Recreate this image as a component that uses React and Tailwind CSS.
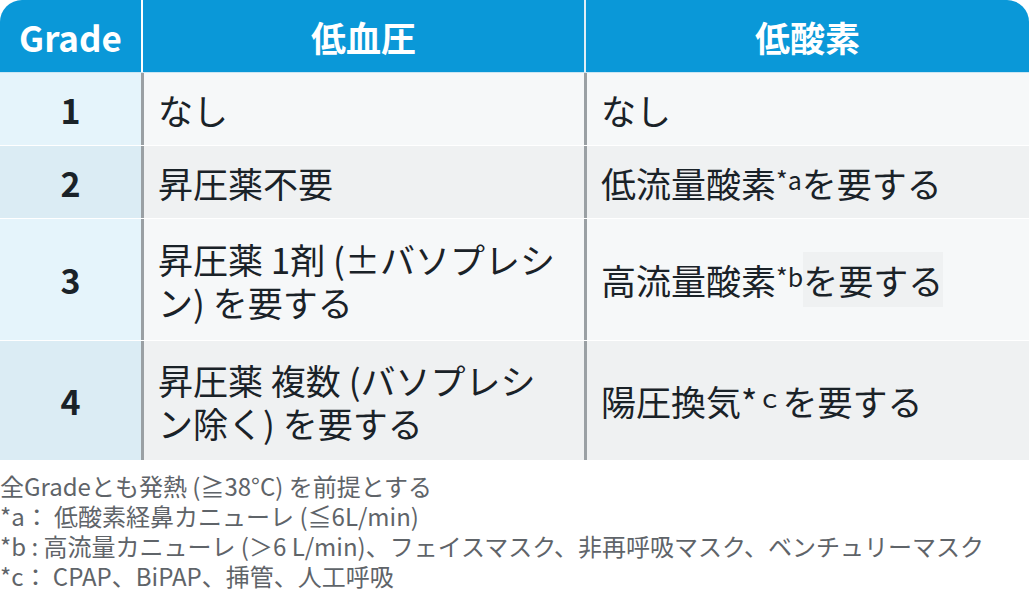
const sup = "text-[25px] relative -top-[3px] align-top leading-none"

const rows = [
  { g: "1", bp: "なし", o2: <>なし</>, gbg: "bg-[#e5f4fb]", bg: "bg-[#f6f8f9]", h: "h-[73px]" },
  { g: "2", bp: "昇圧薬不要", o2: <>低流量酸素<span className={sup}>*a</span>を要する</>, gbg: "bg-[#dbecf4]", bg: "bg-[#eff1f2]", h: "h-[73px]" },
  {
    g: "3",
    bp: "昇圧薬 1剤 (±バソプレシン) を要する",
    o2: <>高流量酸素<span className={sup}>*b</span><span className="bg-[#eff1f2] py-[6px]">を要する</span></>,
    gbg: "bg-[#e5f4fb]", bg: "bg-[#f6f8f9]", h: "h-[122px]",
  },
  { g: "4", bp: "昇圧薬 複数 (バソプレシン除く) を要する", o2: <>陽圧換気*<span className={sup}>ｃ</span>を要する</>, gbg: "bg-[#dbecf4]", bg: "bg-[#eff1f2]", h: "h-[120px]" },
]

export default function App() {
  return (
    <div className="w-[1029px] h-[603px] bg-white text-[#1a2228]" style={{ fontFamily: '"Noto Sans CJK JP", "Noto Sans", sans-serif' }}>
      <div className="flex h-[73px] bg-[#0a98d8] rounded-t-[22px] text-white font-bold text-[35px] border-b border-[#cbe6f3]">
        <div className="w-[141px] flex items-center justify-center pt-[3px]">Grade</div>
        <div className="w-[2px] bg-white" />
        <div className="w-[441px] flex items-center justify-center pt-[3px]">低血圧</div>
        <div className="w-[2px] bg-[#dfeef6]" />
        <div className="flex-1 flex items-center justify-center pt-[3px]">低酸素</div>
      </div>
      {rows.map((r) => (
        <div key={r.g} className={`flex ${r.h} border-b border-white`}>
          <div className={`w-[141px] ${r.gbg} flex items-center justify-center font-bold text-[34px]`}>{r.g}</div>
          <div className="w-[3px] bg-[#9aa0a4]" />
          <div className={`w-[440px] ${r.bg} flex items-center pl-[14px] pr-[24px] text-[35px] leading-[43px]`}>{r.bp}</div>
          <div className="w-[3px] bg-[#9aa0a4]" />
          <div className={`flex-1 ${r.bg} flex items-center pl-[14px] text-[35px] leading-[43px] whitespace-nowrap`}>{r.o2}</div>
        </div>
      ))}
      <div className="pt-[10px] text-[24px] leading-[30px] text-[#5f6469]">
        <div>全Gradeとも発熱 (≧38°C) を前提とする</div>
        <div>*a： 低酸素経鼻カニューレ (≦6L/min)</div>
        <div>*b : 高流量カニューレ (＞6 L/min)、フェイスマスク、非再呼吸マスク、ベンチュリーマスク</div>
        <div>*c： CPAP、BiPAP、挿管、人工呼吸</div>
      </div>
    </div>
  )
}
